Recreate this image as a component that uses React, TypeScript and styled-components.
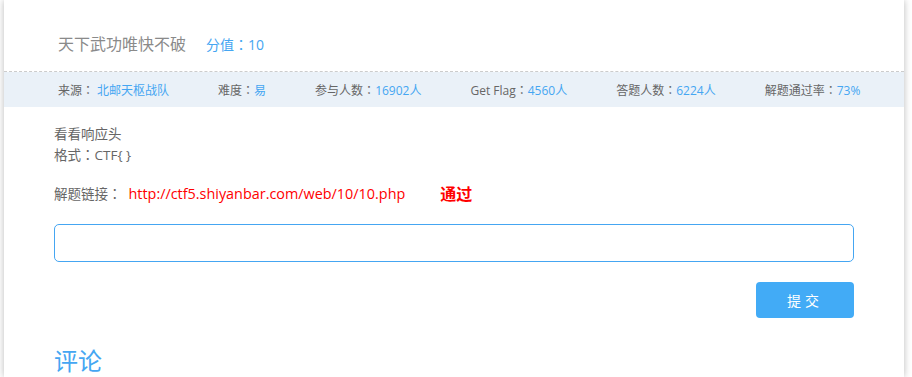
import React from "react";
import styled, { createGlobalStyle } from "styled-components";

const Global = createGlobalStyle`
  html, body { margin: 0; padding: 0; background: #ffffff; }
  body { font-family: "Open Sans", "Noto Sans CJK SC", sans-serif; overflow: hidden; }
`;

const BLUE = "#45a6f2";

const Card = styled.div`
  margin-left: 4px;
  width: 900px;
  min-height: 377px;
  background: #fff;
  box-shadow: 0 0 7px rgba(0, 0, 0, 0.28);
`;

const Colon = styled.span`
  font-family: "Noto Sans CJK TC", sans-serif;
`;

const Header = styled.div`
  display: flex;
  align-items: center;
  height: 24px;
  padding: 32px 0 15px 54px;
  border-bottom: 1px dashed #cccccc;
`;

const Title = styled.span`
  font-size: 16px;
  color: #8a8a8a;
  line-height: 24px;
`;

const Score = styled.span`
  margin-left: 20px;
  font-size: 14px;
  color: ${BLUE};
`;

const InfoBar = styled.div`
  display: flex;
  align-items: center;
  gap: 49px;
  height: 35px;
  padding-left: 54px;
  background: #eaf1f8;
  font-size: 12px;
  color: #666;
`;

const InfoItem = styled.span`
  white-space: nowrap;
`;

const InfoValue = styled.span<{ $gap?: boolean }>`
  color: ${BLUE};
  margin-left: ${(p) => (p.$gap ? "3px" : "0")};
`;

const Body = styled.div`
  padding: 17px 50px 0 50px;
`;

const Line = styled.div`
  font-size: 13.5px;
  line-height: 20px;
  color: #666;
`;

const LinkRow = styled.div`
  display: flex;
  align-items: center;
  margin-top: 18px;
  height: 20px;
  font-size: 13.5px;
  color: #666;
`;

const Link = styled.a`
  margin-left: 7px;
  font-family: "Open Sans", Arial, sans-serif;
  font-size: 14.4px;
  color: #ff0000;
  text-decoration: none;
`;

const Pass = styled.span`
  margin-left: 35px;
  font-family: "Noto Sans CJK SC", sans-serif;
  font-size: 16px;
  font-weight: bold;
  color: #ff0000;
`;

const Input = styled.input`
  display: block;
  box-sizing: border-box;
  width: 800px;
  height: 38px;
  margin-top: 21px;
  border: 1px solid ${BLUE};
  border-radius: 5px;
  outline: none;
`;

const ButtonRow = styled.div`
  display: flex;
  justify-content: flex-end;
  width: 800px;
  margin-top: 20px;
`;

const Submit = styled.button`
  width: 98px;
  height: 36px;
  border: none;
  border-radius: 4px;
  background: #42abf6;
  color: #fff;
  font-family: "Noto Sans CJK SC", sans-serif;
  font-size: 14px;
  letter-spacing: 4px;
  cursor: pointer;
`;

const CommentTitle = styled.h2`
  margin: 27px 0 0;
  font-size: 24px;
  font-weight: normal;
  line-height: 32px;
  color: ${BLUE};
`;

export default function App() {
  return (
    <>
      <Global />
      <Card>
        <Header>
          <Title>天下武功唯快不破</Title>
          <Score>
            分值<Colon>：</Colon>10
          </Score>
        </Header>
        <InfoBar>
          <InfoItem>
            来源<Colon>：</Colon>
            <InfoValue $gap>北邮天枢战队</InfoValue>
          </InfoItem>
          <InfoItem>
            难度<Colon>：</Colon>
            <InfoValue>易</InfoValue>
          </InfoItem>
          <InfoItem>
            参与人数<Colon>：</Colon>
            <InfoValue>16902人</InfoValue>
          </InfoItem>
          <InfoItem>
            Get Flag<Colon>：</Colon>
            <InfoValue>4560人</InfoValue>
          </InfoItem>
          <InfoItem>
            答题人数<Colon>：</Colon>
            <InfoValue>6224人</InfoValue>
          </InfoItem>
          <InfoItem>
            解题通过率<Colon>：</Colon>
            <InfoValue>73%</InfoValue>
          </InfoItem>
        </InfoBar>
        <Body>
          <Line>看看响应头</Line>
          <Line>
            格式<Colon>：</Colon>CTF{"{ }"}
          </Line>
          <LinkRow>
            解题链接<Colon>：</Colon>
            <Link href="#">http://ctf5.shiyanbar.com/web/10/10.php</Link>
            <Pass>通过</Pass>
          </LinkRow>
          <Input type="text" />
          <ButtonRow>
            <Submit>提交</Submit>
          </ButtonRow>
          <CommentTitle>评论</CommentTitle>
        </Body>
      </Card>
    </>
  );
}
